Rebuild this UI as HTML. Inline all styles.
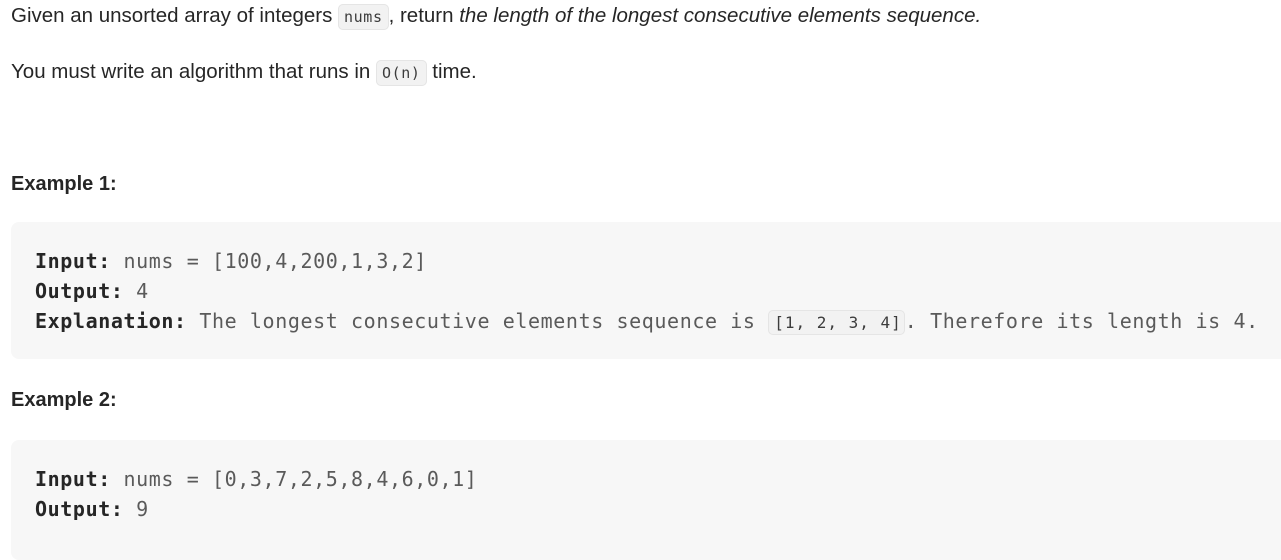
<!DOCTYPE html>
<html><head><style>
html,body{margin:0;padding:0;background:#fff;width:1281px;height:531px;overflow:hidden}
body{font-family:"Liberation Sans",sans-serif;color:#262626;font-size:20.5px}
.t{position:absolute;left:11px;white-space:nowrap}
code{font-family:"DejaVu Sans Mono",monospace;font-size:15px;letter-spacing:0.6px;background:#f2f2f2;border:1px solid #e5e5e5;border-radius:5px;padding:3px 5px;color:#3c3c3c}
.b{font-weight:bold;font-size:20px}
.box{position:absolute;left:11px;width:1300px;background:#f7f7f7;border-radius:8px}
.m{position:absolute;left:35px;font-family:"DejaVu Sans Mono",monospace;font-size:20px;letter-spacing:0.6px;color:#5a5a5a;white-space:nowrap;line-height:30px}
.m b{color:#262626}
.m code{font-size:16px;letter-spacing:1px;padding:2px 2px 2px 5px}
</style></head><body>
<div class="t" style="top:4px">Given an unsorted array of integers <code>nums</code>, return <i>the length of the longest consecutive elements sequence.</i></div>
<div class="t" style="top:60px">You must write an algorithm that runs in <code>O(n)</code> time.</div>
<div class="t b" style="top:173px">Example 1:</div>
<div class="box" style="top:222px;height:137px"></div>
<div class="m" style="top:246px"><b>Input:</b> nums = [100,4,200,1,3,2]<br><b>Output:</b> 4<br><b>Explanation:</b> The longest consecutive elements sequence is <code>[1, 2, 3, 4]</code>. Therefore its length is 4.</div>
<div class="t b" style="top:389px">Example 2:</div>
<div class="box" style="top:440px;height:120px"></div>
<div class="m" style="top:464px"><b>Input:</b> nums = [0,3,7,2,5,8,4,6,0,1]<br><b>Output:</b> 9</div>
</body></html>
